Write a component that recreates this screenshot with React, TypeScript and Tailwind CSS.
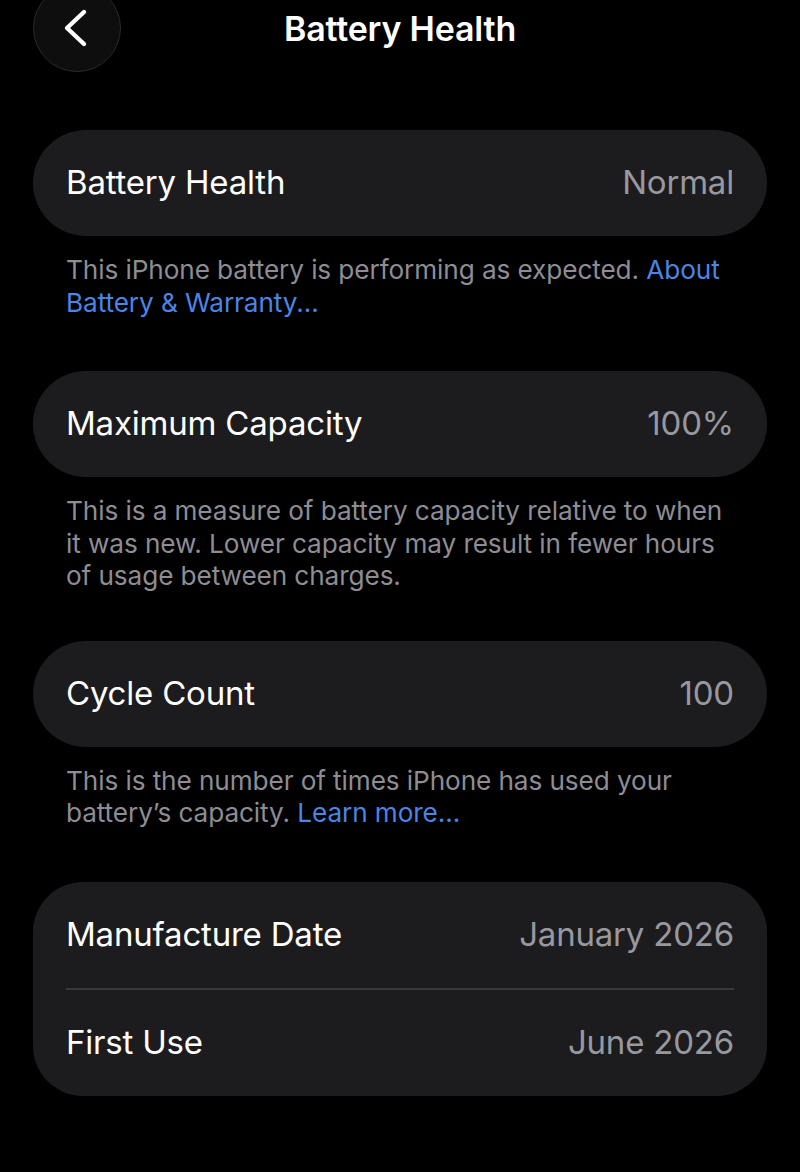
import React from "react";

const font = { fontFamily: "Inter, 'Noto Sans', sans-serif" };

function Row({ label, value }: { label: string; value: string }) {
  return (
    <div className="flex items-center justify-between h-[106px] px-[33px]">
      <span className="text-[33px] text-white tracking-[-0.2px]">{label}</span>
      <span className="text-[33px] text-[#98989f] tracking-[-0.2px]">{value}</span>
    </div>
  );
}

function Footer({ children }: { children: React.ReactNode }) {
  return (
    <p className="px-[33px] pt-[18px] text-[26.2px] leading-[32.5px] text-[#8d8d93] tracking-[-0.1px]">
      {children}
    </p>
  );
}

export default function App() {
  return (
    <div className="w-[800px] h-[1172px] bg-black overflow-hidden" style={font}>
      {/* header */}
      <div className="grid grid-cols-[1fr_auto_1fr] items-center h-[56px] px-[33px]">
        <div className="flex">
          <button className="w-[88px] h-[88px] -my-[16px] shrink-0 rounded-full bg-[#0e0e0f] border border-[#2a2a2c] flex items-center justify-center">
            <svg width="30" height="40" viewBox="0 0 30 40" className="-ml-[4px]">
              <path d="M24 4 L7 20 L24 36" fill="none" stroke="white" strokeWidth="4.4" strokeLinecap="round" strokeLinejoin="round" />
            </svg>
          </button>
        </div>
        <h1 className="text-[34px] font-semibold text-white tracking-[-0.2px]">Battery Health</h1>
        <div />
      </div>

      <div className="px-[33px] pt-[74px]">
        <div className="rounded-[53px] bg-[#1c1c1e]">
          <Row label="Battery Health" value="Normal" />
        </div>
        <Footer>
          This iPhone battery is performing as expected.{" "}
          <span className="text-[#4b85e6]">About Battery &amp; Warranty...</span>
        </Footer>

        <div className="rounded-[53px] bg-[#1c1c1e] mt-[52px]">
          <Row label="Maximum Capacity" value="100%" />
        </div>
        <Footer>
          This is a measure of battery capacity relative to when it was new. Lower capacity may result in fewer hours of usage between charges.
        </Footer>

        <div className="rounded-[53px] bg-[#1c1c1e] mt-[48px]">
          <Row label="Cycle Count" value="100" />
        </div>
        <Footer>
          This is the number of times iPhone has used your battery’s capacity.{" "}
          <span className="text-[#4b85e6]">Learn more...</span>
        </Footer>

        <div className="rounded-[50px] bg-[#1c1c1e] mt-[52px]">
          <Row label="Manufacture Date" value="January 2026" />
          <div className="mx-[33px] h-[2px] bg-[#38383a]" />
          <Row label="First Use" value="June 2026" />
        </div>
      </div>
    </div>
  );
}
